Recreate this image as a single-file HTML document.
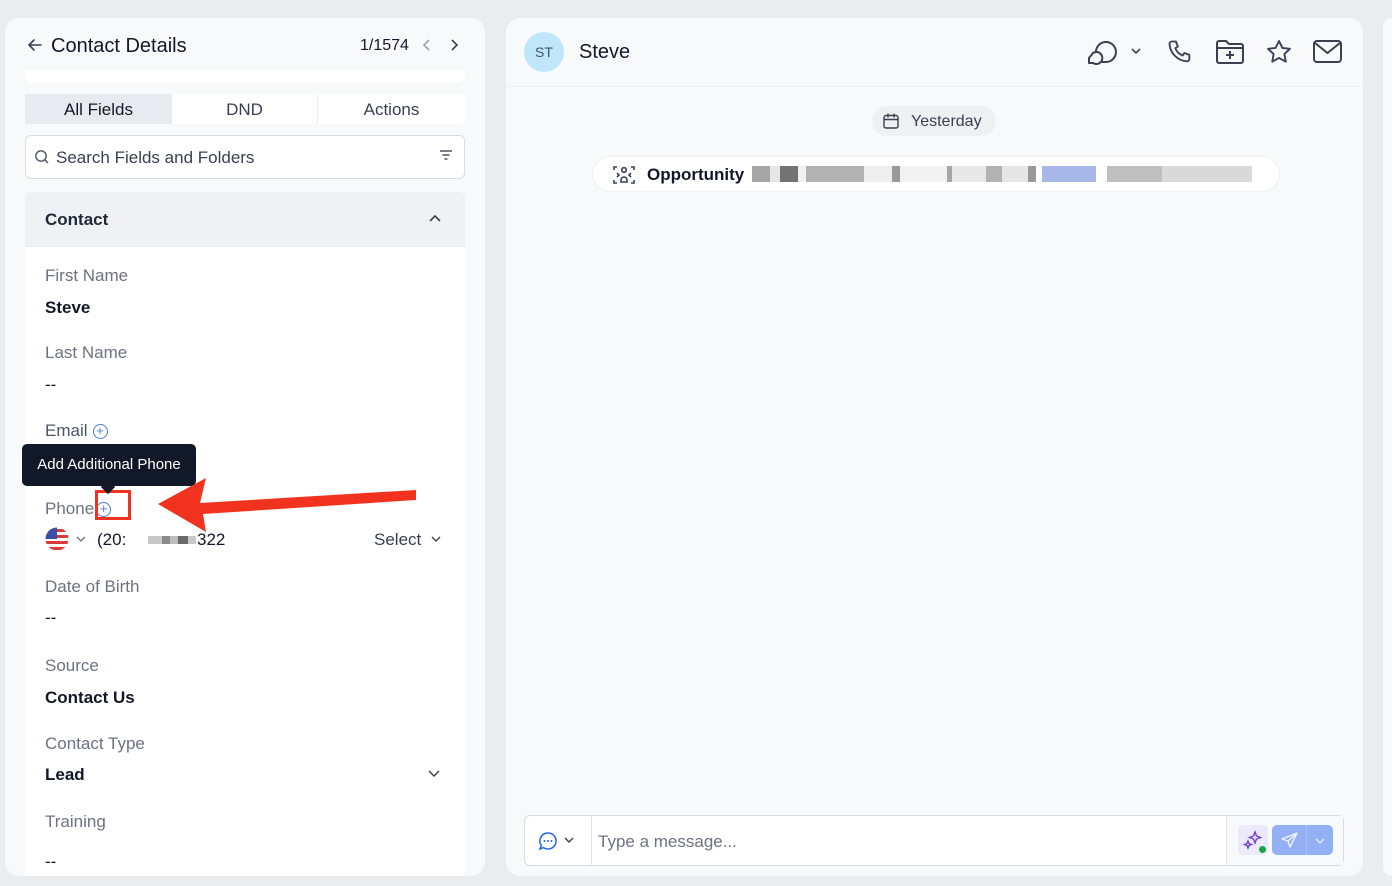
<!DOCTYPE html>
<html><head><style>
*{box-sizing:border-box;margin:0;padding:0}
body{width:1392px;height:886px;background:#eaecf0;font-family:"Liberation Sans",sans-serif;position:relative;overflow:hidden;color:#111827}
.abs{position:absolute}
.lp{left:5px;top:18px;width:480px;height:858px;background:#f8f9fb;border-radius:14px;overflow:hidden}
.rp{left:506px;top:18px;width:857px;height:858px;background:#f8f9fb;border-radius:14px;overflow:hidden}
.lbl{position:absolute;left:45px;font-size:17px;color:#6b7280}
.val{position:absolute;left:45px;font-size:17px;color:#111827;font-weight:bold}
.plus{display:inline-block;width:15px;height:15px;border:1.3px solid #4f7ad8;border-radius:50%;color:#4f7ad8;font-size:13px;line-height:12px;text-align:center;vertical-align:1px;margin-left:5px}
</style></head><body>
<div class="abs" style="left:1383px;top:18px;width:9px;height:858px;background:#f8f9fb;border-radius:10px 0 0 10px"></div>
<div class="abs lp">
<div class="abs" style="left:20px;top:229px;width:440px;height:640px;background:#fff"></div>
</div>
<svg class="abs" style="left:26px;top:36px" width="18" height="18" viewBox="0 0 18 18"><path d="M15 9H3M8 4L3 9l5 5" stroke="#374151" stroke-width="1.6" fill="none" stroke-linecap="round" stroke-linejoin="round"/></svg>
<div class="abs" style="left:51px;top:35px;font-size:20px;color:#111827">Contact Details</div>
<div class="abs" style="left:360px;top:37px;font-size:16px;color:#111827">1/1574</div>
<svg class="abs" style="left:420px;top:37px" width="14" height="16"><path d="M9 3L4 8l5 5" stroke="#9ca3af" stroke-width="1.6" fill="none"/></svg>
<svg class="abs" style="left:447px;top:37px" width="14" height="16"><path d="M5 3l5 5-5 5" stroke="#374151" stroke-width="1.6" fill="none"/></svg>
<div class="abs" style="left:25px;top:70px;width:440px;height:13px;background:#fff;border-radius:0 0 8px 8px"></div>
<div class="abs" style="left:25px;top:94px;width:440px;height:30px;background:#fff;border-radius:4px;display:flex;font-size:17px;color:#374151">
<div style="width:147px;background:#e8eaef;text-align:center;line-height:31px;color:#111827">All Fields</div>
<div style="width:146px;text-align:center;line-height:31px;border-right:1px solid #eceef1">DND</div>
<div style="flex:1;text-align:center;line-height:31px">Actions</div></div>
<div class="abs" style="left:25px;top:135px;width:440px;height:44px;background:#fff;border:1px solid #d9dce2;border-radius:6px"></div>
<svg class="abs" style="left:34px;top:149px" width="16" height="16"><circle cx="7" cy="7" r="5.2" stroke="#4b5563" stroke-width="1.4" fill="none"/><path d="M11 11l3 3" stroke="#4b5563" stroke-width="1.4"/></svg>
<div class="abs" style="left:56px;top:148px;font-size:17px;color:#374151">Search Fields and Folders</div>
<svg class="abs" style="left:438px;top:148px" width="16" height="14"><path d="M2 3h12M4.5 7h7M6.5 11h3" stroke="#4b5563" stroke-width="1.4"/></svg>
<div class="abs" style="left:25px;top:192px;width:440px;height:55px;background:#f0f1f5;border-radius:6px 6px 0 0;border-bottom:1px solid #e5e7eb"></div>
<div class="abs" style="left:45px;top:210px;font-size:17px;font-weight:bold;color:#1f2937">Contact</div>
<svg class="abs" style="left:427px;top:212px" width="16" height="12"><path d="M3 9l5-5 5 5" stroke="#374151" stroke-width="1.6" fill="none"/></svg>
<div class="lbl" style="top:266px">First Name</div><div class="val" style="top:298px">Steve</div>
<div class="lbl" style="top:343px">Last Name</div><div class="val" style="top:375px;font-weight:normal">--</div>
<div class="lbl" style="top:421px;color:#4b5563">Email<span class="plus">+</span></div>
<div class="lbl" style="top:499px;color:#6b7280">Phone<span class="plus" style="margin-left:2px">+</span></div>
<div class="abs" style="left:95px;top:490px;width:36px;height:30px;border:3.5px solid #f0321e"></div>
<svg class="abs" style="left:44px;top:527px" width="26" height="24"><defs><clipPath id="c"><circle cx="13" cy="12" r="11.5"/></clipPath></defs><g clip-path="url(#c)"><rect width="26" height="24" fill="#fff"/><rect y="2" width="26" height="3" fill="#d93b3b"/><rect y="8" width="26" height="3" fill="#d93b3b"/><rect y="14" width="26" height="3" fill="#d93b3b"/><rect y="20" width="26" height="3" fill="#d93b3b"/><rect width="13" height="12" fill="#3c4fa8"/></g></svg>
<svg class="abs" style="left:74px;top:533px" width="14" height="12"><path d="M3 4l4 4 4-4" stroke="#6b7280" stroke-width="1.3" fill="none"/></svg>
<div class="abs" style="left:97px;top:530px;font-size:17px;color:#111827">(20:</div>
<div class="abs" style="left:148px;top:536px;width:48px;height:8px;background:linear-gradient(90deg,#c8c8c8 0 14px,#8a8a8a 14px 22px,#bdbdbd 22px 30px,#6a6a6a 30px 40px,#c8c8c8 40px)"></div>
<div class="abs" style="left:197px;top:530px;font-size:17px;color:#111827">322</div>
<div class="abs" style="left:374px;top:530px;font-size:17px;color:#374151">Select</div>
<svg class="abs" style="left:429px;top:533px" width="14" height="12"><path d="M3 4l4 4 4-4" stroke="#374151" stroke-width="1.4" fill="none"/></svg>
<div class="lbl" style="top:577px">Date of Birth</div><div class="val" style="top:608px;font-weight:normal">--</div>
<div class="lbl" style="top:656px">Source</div><div class="val" style="top:688px">Contact Us</div>
<div class="lbl" style="top:734px">Contact Type</div><div class="val" style="top:765px">Lead</div>
<svg class="abs" style="left:426px;top:767px" width="16" height="12"><path d="M3 4l5 5 5-5" stroke="#374151" stroke-width="1.5" fill="none"/></svg>
<div class="lbl" style="top:812px">Training</div><div class="val" style="top:852px;font-weight:normal">--</div>
<div class="abs" style="left:22px;top:444px;width:174px;height:42px;background:#111827;border-radius:5px;color:#fff;font-size:15px;line-height:42px;text-align:center">Add Additional Phone</div>
<div class="abs" style="left:103px;top:482px;width:10px;height:10px;background:#111827;transform:rotate(45deg)"></div>
<svg class="abs" style="left:150px;top:470px" width="275" height="70"><path d="M266 20L50 33 56 8 8 34 56 62 53 44 266 30z" fill="#f0321e"/></svg>
<div class="abs rp"></div>
<div class="abs" style="left:506px;top:86px;width:857px;height:1px;background:#eceef2"></div>
<div class="abs" style="left:524px;top:32px;width:40px;height:40px;border-radius:50%;background:#bfe6fb;color:#3f5568;font-size:14px;text-align:center;line-height:40px">ST</div>
<div class="abs" style="left:579px;top:41px;font-size:20px;color:#111827">Steve</div>
<svg class="abs" style="left:1085px;top:36px" width="34" height="32" viewBox="0 0 34 32"><path d="M11 17A10 10 0 1 1 21 26H14" stroke="#374151" stroke-width="2" fill="none" stroke-linejoin="round"/><path d="M8 17a6 6 0 1 1 0 10H4V22z" stroke="#374151" stroke-width="2" fill="#f8f9fb" stroke-linejoin="round"/></svg>
<svg class="abs" style="left:1128px;top:44px" width="16" height="14"><path d="M4 5l4 4 4-4" stroke="#374151" stroke-width="1.6" fill="none"/></svg>
<svg class="abs" style="left:1166px;top:38px" width="28" height="28" viewBox="0 0 24 24"><path d="M5 3h3.5l1.7 4.3-2.2 1.4a11 11 0 0 0 6.3 6.3l1.4-2.2 4.3 1.7V18a2 2 0 0 1-2 2A16 16 0 0 1 3 5a2 2 0 0 1 2-2z" stroke="#374151" stroke-width="1.6" fill="none" stroke-linejoin="round"/></svg>
<svg class="abs" style="left:1214px;top:38px" width="32" height="28" viewBox="0 0 32 28"><path d="M3 5a2 2 0 0 1 2-2h7l3 3h12a2 2 0 0 1 2 2v15a2 2 0 0 1-2 2H5a2 2 0 0 1-2-2z" stroke="#374151" stroke-width="2" fill="none"/><path d="M3 10h26M16 13v8M12 17h8" stroke="#374151" stroke-width="2"/></svg>
<svg class="abs" style="left:1264px;top:38px" width="30" height="28" viewBox="0 0 24 24"><path d="M12 2.5l2.9 6 6.5.8-4.8 4.5 1.2 6.5L12 17.1l-5.8 3.2 1.2-6.5L2.6 9.3l6.5-.8z" stroke="#374151" stroke-width="1.6" fill="none" stroke-linejoin="round"/></svg>
<svg class="abs" style="left:1312px;top:39px" width="32" height="26" viewBox="0 0 32 26"><rect x="2" y="2" width="27" height="21" rx="3" stroke="#374151" stroke-width="2" fill="none"/><path d="M3 4l12.5 10L28 4" stroke="#374151" stroke-width="2" fill="none"/></svg>
<div class="abs" style="left:872px;top:106px;width:124px;height:30px;background:#eff0f3;border-radius:15px"></div>
<svg class="abs" style="left:882px;top:112px" width="18" height="18"><rect x="2" y="3.5" width="14" height="12.5" rx="2" stroke="#374151" stroke-width="1.4" fill="none"/><path d="M2 7.5h14M6 1.5v4M12 1.5v4" stroke="#374151" stroke-width="1.4"/></svg>
<div class="abs" style="left:911px;top:113px;font-size:16px;color:#374151">Yesterday</div>
<div class="abs" style="left:592px;top:156px;width:688px;height:36px;background:#fff;border-radius:18px;border:1px solid #f0f1f4"></div>
<svg class="abs" style="left:612px;top:165px" width="24" height="20" viewBox="0 0 24 20"><g stroke="#374151" stroke-width="1.6" fill="none"><circle cx="12" cy="5" r="2.3"/><path d="M9 15a3 3 0 0 1 6 0v2H9z"/><path d="M2 5V2h3M22 5V2h-3M2 15v3h3M22 15v3h-3M5 8l2 2-2 2M19 8l-2 2 2 2"/></g></svg>
<div class="abs" style="left:647px;top:165px;font-size:17px;font-weight:bold;color:#111827">Opportunity</div>
<div class="abs" style="left:752px;top:166px;width:500px;height:16px;background:linear-gradient(90deg,#888 0 18px,#ddd 18px 28px,#444 28px 46px,#eee 46px 54px,#999 54px 112px,#e8e8e8 112px 140px,#777 140px 148px,#eee 148px 195px,#888 195px 200px,#e0e0e0 200px 234px,#999 234px 250px,#ddd 250px 276px,#777 276px 284px,#fff 284px 290px,#8aa0e0 290px 344px,#fff 344px 355px,#aaa 355px 410px,#ccc 410px 500px);opacity:.75"></div>
<div class="abs" style="left:524px;top:815px;width:820px;height:51px;background:#fff;border:1px solid #d9dce2;border-radius:6px"></div>
<div class="abs" style="left:591px;top:816px;width:1px;height:49px;background:#e2e4e8"></div>
<div class="abs" style="left:1226px;top:816px;width:117px;height:49px;background:#f8f9fb;border-left:1px solid #e2e4e8"></div>
<svg class="abs" style="left:538px;top:831px" width="20" height="20" viewBox="0 0 20 20"><path d="M10 2a8 8 0 1 1-4.5 14.6L2 18l1.3-3.5A8 8 0 0 1 10 2z" stroke="#2563eb" stroke-width="1.5" fill="none"/><circle cx="6.5" cy="10" r="1" fill="#2563eb"/><circle cx="10" cy="10" r="1" fill="#2563eb"/><circle cx="13.5" cy="10" r="1" fill="#2563eb"/></svg>
<svg class="abs" style="left:563px;top:835px" width="12" height="10"><path d="M2 3l4 4 4-4" stroke="#374151" stroke-width="1.4" fill="none"/></svg>
<div class="abs" style="left:598px;top:832px;font-size:17px;color:#6b7280">Type a message...</div>
<div class="abs" style="left:1238px;top:825px;width:30px;height:30px;background:#ece9fb;border-radius:4px"></div>
<svg class="abs" style="left:1242px;top:829px" width="22" height="22"><path d="M13 3l1.5 4 4 1.5-4 1.5L13 14l-1.5-4-4-1.5 4-1.5zM6 12l1 2.5 2.5 1-2.5 1L6 19l-1-2.5-2.5-1 2.5-1z" stroke="#6d3fd6" stroke-width="1.4" fill="none"/></svg>
<div class="abs" style="left:1259px;top:846px;width:7px;height:7px;border-radius:50%;background:#16a34a"></div>
<div class="abs" style="left:1272px;top:825px;width:61px;height:30px;background:#93b0f5;border-radius:5px"></div>
<div class="abs" style="left:1306px;top:825px;width:1px;height:30px;background:#a9c0f7"></div>
<svg class="abs" style="left:1280px;top:831px" width="20" height="18"><path d="M17 2L2 8l6 2 2 6z M8 10l9-8" stroke="#eef3ff" stroke-width="1.4" fill="none" stroke-linejoin="round"/></svg>
<svg class="abs" style="left:1314px;top:836px" width="12" height="10"><path d="M2 3l4 4 4-4" stroke="#e6edff" stroke-width="1.3" fill="none"/></svg>
</body></html>
